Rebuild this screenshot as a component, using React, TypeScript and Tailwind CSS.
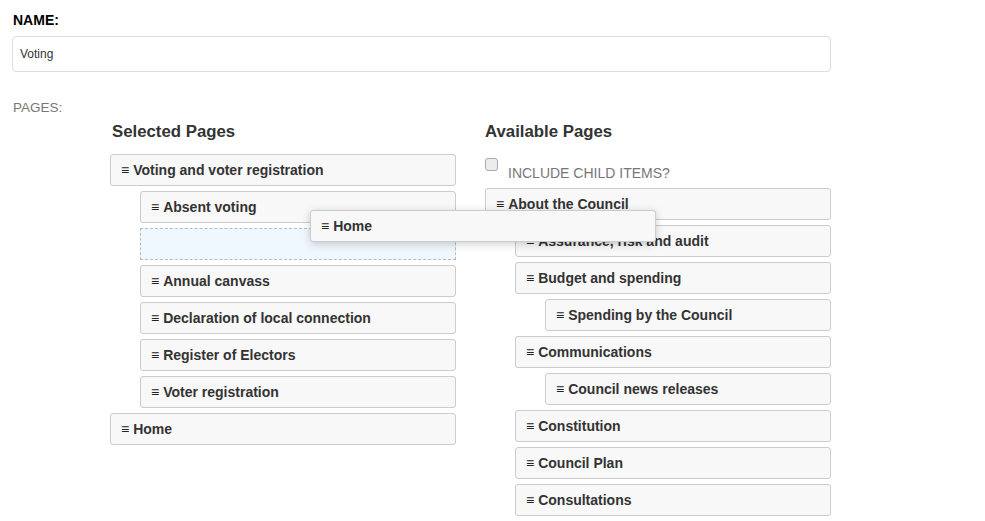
import React from "react";

type Item = { name: string; level: number };

const selected: Item[] = [
    { name: "Voting and voter registration", level: 0 },
    { name: "Absent voting", level: 1 },
    { name: "", level: -1 }, // placeholder for the drop spot
    { name: "Annual canvass", level: 1 },
    { name: "Declaration of local connection", level: 1 },
    { name: "Register of Electors", level: 1 },
    { name: "Voter registration", level: 1 },
    { name: "Home", level: 0 },
];

const available: Item[] = [
    { name: "About the Council", level: 0 },
    { name: "Assurance, risk and audit", level: 1 },
    { name: "Budget and spending", level: 1 },
    { name: "Spending by the Council", level: 2 },
    { name: "Communications", level: 1 },
    { name: "Council news releases", level: 2 },
    { name: "Constitution", level: 1 },
    { name: "Council Plan", level: 1 },
    { name: "Consultations", level: 1 },
];

const indent = ["ml-0", "ml-[30px]", "ml-[60px]"];

function Row({ item }: { item: Item }) {
    if (item.level < 0) {
        return (
            <div className="ml-[30px] mb-[5px] h-[32px] border border-dashed border-[#bbb] bg-[#f0f8ff]" />
        );
    }
    return (
        <div
            className={
                "mb-[5px] h-[32px] flex items-center pl-[10px] border border-[#ccc] rounded-[3px] bg-[#f8f8f8] text-[14px] font-bold text-[#333] " +
                indent[item.level]
            }
        >
            <span className="mr-[4px] font-black text-[#222]">≡</span>
            {item.name}
        </div>
    );
}

export default function App() {
    return (
        <div className="relative w-[985px] h-[521px] overflow-hidden bg-white pl-[12px] pt-[12px] font-['Liberation_Sans',Arial,sans-serif]">
            <div className="pl-[1px] text-[14px] font-bold text-black leading-[17px]">NAME:</div>
            <div className="mt-[7px] w-[819px] h-[36px] border border-[#ddd] rounded-[4px] flex items-center px-[7px] text-[12px] text-[#333]">
                Voting
            </div>
            <div className="mt-[28px] pl-[1px] text-[13.5px] text-[#777] leading-[16px]">PAGES:</div>

            <div className="flex ml-[98px] gap-[29px]">
                <div className="w-[346px]">
                    <h3 className="mt-[6px] pl-[2px] text-[16.8px] font-bold text-[#333] leading-[20px]">Selected Pages</h3>
                    <div className="mt-[12px]">
                        {selected.map((item, i) => (
                            <Row key={i} item={item} />
                        ))}
                    </div>
                </div>
                <div className="w-[346px]">
                    <h3 className="mt-[6px] text-[16.8px] font-bold text-[#333] leading-[20px]">Available Pages</h3>
                    <div className="mt-[15px] flex items-start h-[28px]">
                        <span className="mt-[1px] w-[13px] h-[13px] border border-[#aaa] rounded-[3px] bg-[#ececec]" />
                        <span className="ml-[10px] mt-[8px] text-[14px] text-[#777] leading-[16px]">
                            INCLUDE CHILD ITEMS?
                        </span>
                    </div>
                    <div className="mt-[3px]">
                        {available.map((item, i) => (
                            <Row key={i} item={item} />
                        ))}
                    </div>
                </div>
            </div>

            {/* item being dragged */}
            <div className="absolute left-[310px] top-[210px] w-[346px] h-[32px] flex items-center pl-[10px] border border-[#ccc] rounded-[3px] bg-[#f8f8f8] shadow-[0_2px_8px_rgba(0,0,0,0.2)] text-[14px] font-bold text-[#333]">
                <span className="mr-[4px] font-black text-[#222]">≡</span>
                Home
            </div>
        </div>
    );
}
